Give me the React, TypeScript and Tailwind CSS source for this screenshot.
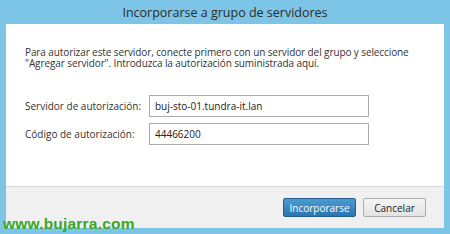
export default function App() {
  return (
    <div className="relative w-[450px] h-[234px] bg-[#7cc5e6] flex flex-col font-['Open_Sans','Noto_Sans',sans-serif] overflow-hidden">
      {/*--- title ---*/}
      <div className="h-[24px] flex-none flex items-center justify-center text-[12.5px] text-[#2b2b2b] pt-[3px]">
        Incorporarse a grupo de servidores
      </div>
      {/*--- body ---*/}
      <div className="mx-[6px] flex-none h-[162px] bg-white pl-[19px] pt-[23px]">
        <p className="text-[10px] leading-[11px] text-[#333] tracking-[-0.1px]">
          Para autorizar este servidor, conecte primero con un servidor del grupo y seleccione
          <br />
          "Agregar servidor". Introduzca la autorización suministrada aquí.
        </p>
        <div className="mt-[26px] flex flex-col gap-[6px]">
          <div className="flex items-center">
            <span className="w-[124px] text-[10px] text-[#333]">Servidor de autorización:</span>
            <div className="w-[220px] h-[22px] border border-[#ababab] flex items-center px-[5px] text-[10px] text-[#222]">
              buj-sto-01.tundra-it.lan
            </div>
          </div>
          <div className="flex items-center">
            <span className="w-[124px] text-[10px] text-[#333]">Código de autorización:</span>
            <div className="w-[220px] h-[22px] border border-[#ababab] flex items-center px-[5px] text-[10px] text-[#222]">
              44466200
            </div>
          </div>
        </div>
      </div>
      {/*--- footer ---*/}
      <div className="mx-[6px] flex-none h-[42px] bg-[#f0f0f0] border-t border-[#d9d9d9] flex items-center justify-end gap-[7px] pr-[18px]">
        <button className="w-[73px] h-[19px] rounded-[2px] border border-[#215c8f] bg-gradient-to-b from-[#4d9bd3] to-[#2c74b0] text-white text-[10px] leading-none">
          Incorporarse
        </button>
        <button className="w-[63px] h-[19px] rounded-[2px] border border-[#acacac] bg-gradient-to-b from-[#f4f4f4] to-[#e2e2e2] text-[#222] text-[10px] leading-none">
          Cancelar
        </button>
      </div>
      {/*--- watermark ---*/}
      <div className="absolute left-[3px] top-[212px] text-[15.5px] font-semibold text-[#3aa526] font-['Liberation_Sans',sans-serif] tracking-[0.2px]">
        www.bujarra.com
      </div>
    </div>
  );
}
